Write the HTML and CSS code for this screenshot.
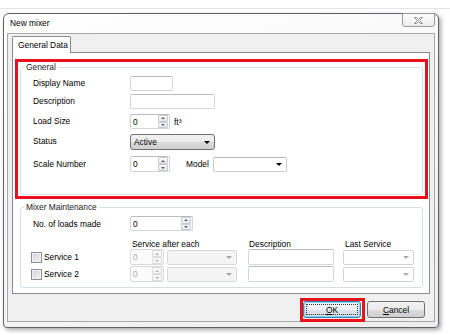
FILE: index.html
```html
<!DOCTYPE html>
<html lang="en">
<head>
    <meta charset="UTF-8">
    <title>New mixer</title>
    <link rel="stylesheet" href="styles.css">
</head>
<body>

    <div class="desk">
        <div class="window">
            <div class="titlebar">
                <span class="title">New mixer</span>
                <button class="close">
                    <svg width="9" height="7" viewBox="0 0 9 7">
                        <path d="M0.5 0.5h2l2 2 2-2h2l-3 3 3 3h-2l-2-2-2 2h-2l3-3z" fill="#fff" stroke="#7a7a7a" stroke-width="0.8"/>
                    </svg>
                </button>
            </div>

            <div class="client">
                <div class="tabs">
                    <div class="tab">General Data</div>
                </div>

                <div class="tabpage">
                    <div class="mark">
                        <fieldset class="group">
                            <legend>General</legend>
                            <div class="form">
                                <label>Display Name</label>
                                <div class="field"><span class="text w43"></span></div>

                                <label>Description</label>
                                <div class="field"><span class="text w85"></span></div>

                                <label>Load Size</label>
                                <div class="field">
                                    <div class="spin w40"><span class="val">0</span><span class="btns"><i class="up"></i><i class="dn"></i></span></div>
                                    <span class="unit">ft³</span>
                                </div>

                                <label>Status</label>
                                <div class="field">
                                    <div class="combo status w85"><span>Active</span><b class="arrow"></b></div>
                                </div>

                                <label class="tall">Scale Number</label>
                                <div class="field">
                                    <div class="spin w40 h16"><span class="val">0</span><span class="btns"><i class="up"></i><i class="dn"></i></span></div>
                                    <span class="model-label">Model</span>
                                    <div class="combo w74 h16"><span></span><b class="arrow"></b></div>
                                </div>
                            </div>
                        </fieldset>
                    </div>

                    <fieldset class="group maint">
                        <legend>Mixer Maintenance</legend>
                        <div class="mbody">
                            <div class="mrow loads">
                                <label class="mlabel">No. of loads made</label>
                                <div class="spin w63"><span class="val">0</span><span class="btns"><i class="up"></i><i class="dn"></i></span></div>
                            </div>

                            <div class="mrow head">
                                <span class="c-label"></span>
                                <span class="h-after">Service after each</span>
                                <span class="h-desc">Description</span>
                                <span class="h-last">Last Service</span>
                            </div>

                            <div class="mrow service">
                                <label class="c-label"><span class="chk"></span>Service 1</label>
                                <div class="spin off w34 h16"><span class="val">0</span><span class="btns"><i class="up"></i><i class="dn"></i></span></div>
                                <div class="combo off c-unit h16"><span></span><b class="arrow"></b></div>
                                <span class="text c-desc h16"></span>
                                <div class="combo light c-last h16"><span></span><b class="arrow"></b></div>
                            </div>

                            <div class="mrow service">
                                <label class="c-label"><span class="chk"></span>Service 2</label>
                                <div class="spin off w34 h16"><span class="val">0</span><span class="btns"><i class="up"></i><i class="dn"></i></span></div>
                                <div class="combo off c-unit h16"><span></span><b class="arrow"></b></div>
                                <span class="text c-desc h16"></span>
                                <div class="combo light c-last h16"><span></span><b class="arrow"></b></div>
                            </div>
                        </div>
                    </fieldset>
                </div>

                <div class="footer">
                    <div class="mark-btn">
                        <button class="btn default"><span class="focus"><u>O</u>K</span></button>
                    </div>
                    <button class="btn cancel"><u>C</u>ancel</button>
                </div>
            </div>
        </div>
    </div>

</body>
</html>
```

FILE: styles.css
```css
* {
    margin: 0;
    padding: 0;
    box-sizing: border-box;
}

body {
    background: #fff;
    font-family: "Liberation Sans", Arial, sans-serif;
    font-size: 8.4px;
    color: #000;
}

.desk {
    margin-top: 8px;
    border-top: 1px solid #e1e5e9;
    padding: 4px 0 0 3px;
    height: 327px;
}

/* window frame */

.window {
    width: 436px;
    height: 315px;
    padding: 0 3px;
    border: 1px solid #5d6166;
    border-radius: 6px 6px 4px 4px;
    background: linear-gradient(160deg, #ffffff 0%, #f6f6f6 55%, #ededed 100%);
    box-shadow: 2px 2px 4px rgba(0, 0, 0, 0.35);
}

.titlebar {
    height: 19px;
    display: flex;
    justify-content: space-between;
    align-items: flex-start;
}

.title {
    padding-left: 3px;
    line-height: 19px;
}

.close {
    width: 33px;
    height: 14px;
    margin-top: -1px;
    border: 1px solid #9a9a9a;
    border-radius: 0 0 3px 3px;
    background: linear-gradient(#fdfdfd, #ececec);
    display: flex;
    align-items: center;
    justify-content: center;
}

.close svg {
    display: block;
}

.client {
    height: 289px;
    padding: 0 4px;
    border: 1px solid #a7a7a7;
    background: #f0f0f0;
}

/* tabs */

.tabs {
    height: 18px;
    padding-top: 2px;
}

.tab {
    position: relative;
    z-index: 1;
    width: 59px;
    height: 17px;
    padding-left: 5px;
    line-height: 16px;
    border: 1px solid #898c95;
    border-bottom: none;
    border-radius: 2px 2px 0 0;
    background: #fff;
}

.tabpage {
    height: 242px;
    border: 1px solid #898c95;
    background: #fff;
}

/* group boxes */

.mark {
    margin: 6px 1px 0 2px;
    padding: 0 2px 1px 2px;
    border: 3px solid #e8111c;
}

.group {
    border: 1px solid #d5dfe5;
    border-radius: 3px;
    padding: 0;
    min-width: 0;
}

.group legend {
    margin-left: 3px;
    padding: 0 2px;
    line-height: 10px;
    color: #1b1b1b;
}

.form {
    display: grid;
    grid-template-columns: 97px auto;
    grid-template-rows: 18px 20px 20px 22px 16px;
    align-items: start;
    padding: 4px 0 22px 12px;
}

.form label {
    line-height: 15px;
}

.form label.tall {
    line-height: 16px;
}

.field {
    display: flex;
    align-items: center;
}

.unit {
    margin-left: 4px;
}

.model-label {
    margin: 0 4px 0 16px;
}

.maint {
    width: 403px;
    margin: 3px 0 0 7px;
}

.mbody {
    padding: 4px 0 5px 10px;
}

.mrow {
    display: flex;
    align-items: center;
}

.mlabel {
    width: 99px;
    padding-left: 2px;
}

.head {
    height: 18px;
    padding-top: 8px;
    line-height: 10px;
}

.c-label {
    width: 99px;
    display: flex;
    align-items: center;
}

.h-after {
    width: 118px;
    padding-left: 2px;
}

.h-desc {
    width: 95px;
    padding-left: 1px;
}

.h-last {
    padding-left: 2px;
}

.service + .service {
    margin-top: 1px;
}

.chk {
    width: 11px;
    height: 11px;
    margin-right: 2px;
    border: 1px solid #8e8f8f;
    background: linear-gradient(135deg, #cdd0d4, #f6f6f6);
    box-shadow: inset 0 0 0 1px #f1f1f1;
}

.c-unit {
    width: 70px;
    margin-left: 3px;
}

.c-desc {
    width: 86px;
    margin-left: 11px;
}

.c-last {
    width: 71px;
    margin-left: 9px;
}

/* controls */

.text {
    display: block;
    height: 15px;
    border: 1px solid #d4d8de;
    border-top-color: #b9bdc3;
    border-radius: 2px;
    background: #fff;
}

.w34 { width: 34px; }
.w40 { width: 40px; }
.w43 { width: 43px; }
.w63 { width: 63px; }
.w74 { width: 74px; }
.w85 { width: 85px; }

.spin {
    display: flex;
    height: 15px;
    padding: 0 1px 0 2px;
    border: 1px solid #d0d4da;
    border-top-color: #b9bdc3;
    border-radius: 2px;
    background: #fff;
}

.h16 {
    height: 16px;
}

.spin .val {
    flex: 1;
    display: flex;
    align-items: center;
}

.btns {
    width: 10px;
    display: flex;
    flex-direction: column;
}

.btns i {
    flex: 1;
    display: flex;
    align-items: center;
    justify-content: center;
    border: 1px solid #c8cbd0;
    border-radius: 1px;
    background: linear-gradient(#fbfbfb, #e6e6e6);
}

.up::after,
.dn::after {
    content: "";
    border-left: 2px solid transparent;
    border-right: 2px solid transparent;
}

.up::after { border-bottom: 2px solid #56606c; }
.dn::after { border-top: 2px solid #56606c; }

.spin.off {
    border-color: #dadada;
    background: #fbfbfb;
    color: #a9a9a9;
}

.spin.off .btns i {
    border-color: #dcdcdc;
    background: #f7f7f7;
}

.spin.off .up::after { border-bottom-color: #b3b3b3; }
.spin.off .dn::after { border-top-color: #b3b3b3; }

.combo {
    display: flex;
    align-items: center;
    justify-content: space-between;
    height: 15px;
    padding: 0 4px 0 3px;
    border: 1px solid #c9cdd3;
    border-top-color: #b6bac0;
    border-radius: 2px;
    background: #fff;
}

.arrow {
    border-left: 3px solid transparent;
    border-right: 3px solid transparent;
    border-top: 3px solid #000;
}

.combo.status {
    height: 16px;
    border: 1px solid #707070;
    border-radius: 3px;
    background: linear-gradient(#f2f2f2 0%, #ebebeb 50%, #dddddd 50%, #cfcfcf 100%);
}

.combo.off {
    border-color: #d9d9d9;
    background: #f4f4f4;
}

.combo.off .arrow,
.combo.light .arrow {
    border-top-color: #a8a8a8;
}

.combo.light {
    border-color: #d3d3d3;
}

/* dialog buttons */

.footer {
    height: 27px;
    padding-right: 5px;
    display: flex;
    justify-content: flex-end;
    align-items: flex-start;
}

.mark-btn {
    width: 65px;
    height: 24px;
    margin-top: 4px;
    border: 3px solid #e8111c;
}

.btn {
    width: 58px;
    height: 17px;
    display: flex;
    align-items: center;
    justify-content: center;
    font-family: inherit;
    font-size: 8.4px;
    color: #000;
    border: 1px solid #707070;
    border-radius: 3px;
    background: linear-gradient(#f2f2f2 0%, #ebebeb 50%, #dddddd 50%, #cfcfcf 100%);
}

.btn.default {
    border-color: #3c7fb1;
    box-shadow: inset 0 0 0 1px #7fd6f5;
    background: linear-gradient(#f4f8fa 0%, #ebf1f4 50%, #dde6ec 50%, #d3dde4 100%);
}

.focus {
    flex: 1;
    align-self: stretch;
    margin: 2px;
    border: 1px dotted #333;
    display: flex;
    align-items: center;
    justify-content: center;
}

.cancel {
    margin: 7px 0 0 2px;
}
```
